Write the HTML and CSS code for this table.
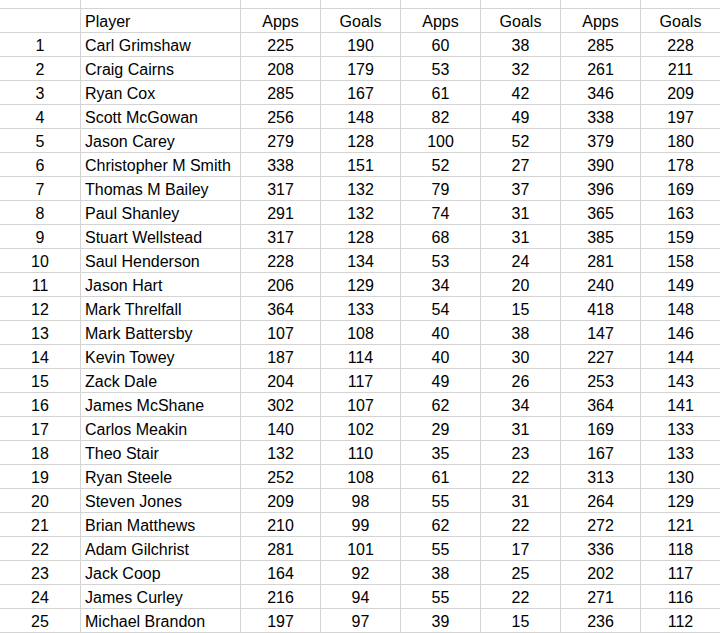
FILE: index.html
```html
<!DOCTYPE html>
<html>
<head>
<meta charset="utf-8">
<link rel="stylesheet" href="styles.css">
</head>
<body>
<div class="sheet" id="sheet">
  <div class="c top"></div><div class="c top"></div><div class="c top"></div><div class="c top"></div><div class="c top"></div><div class="c top"></div><div class="c top"></div><div class="c top"></div>
  <div class="c"></div><div class="c name">Player</div><div class="c">Apps</div><div class="c">Goals</div><div class="c">Apps</div><div class="c">Goals</div><div class="c">Apps</div><div class="c">Goals</div>
  <div class="c">1</div><div class="c name">Carl Grimshaw</div><div class="c">225</div><div class="c">190</div><div class="c">60</div><div class="c">38</div><div class="c">285</div><div class="c">228</div>
  <div class="c">2</div><div class="c name">Craig Cairns</div><div class="c">208</div><div class="c">179</div><div class="c">53</div><div class="c">32</div><div class="c">261</div><div class="c">211</div>
  <div class="c">3</div><div class="c name">Ryan Cox</div><div class="c">285</div><div class="c">167</div><div class="c">61</div><div class="c">42</div><div class="c">346</div><div class="c">209</div>
  <div class="c">4</div><div class="c name">Scott McGowan</div><div class="c">256</div><div class="c">148</div><div class="c">82</div><div class="c">49</div><div class="c">338</div><div class="c">197</div>
  <div class="c">5</div><div class="c name">Jason Carey</div><div class="c">279</div><div class="c">128</div><div class="c">100</div><div class="c">52</div><div class="c">379</div><div class="c">180</div>
  <div class="c">6</div><div class="c name">Christopher M Smith</div><div class="c">338</div><div class="c">151</div><div class="c">52</div><div class="c">27</div><div class="c">390</div><div class="c">178</div>
  <div class="c">7</div><div class="c name">Thomas M Bailey</div><div class="c">317</div><div class="c">132</div><div class="c">79</div><div class="c">37</div><div class="c">396</div><div class="c">169</div>
  <div class="c">8</div><div class="c name">Paul Shanley</div><div class="c">291</div><div class="c">132</div><div class="c">74</div><div class="c">31</div><div class="c">365</div><div class="c">163</div>
  <div class="c">9</div><div class="c name">Stuart Wellstead</div><div class="c">317</div><div class="c">128</div><div class="c">68</div><div class="c">31</div><div class="c">385</div><div class="c">159</div>
  <div class="c">10</div><div class="c name">Saul Henderson</div><div class="c">228</div><div class="c">134</div><div class="c">53</div><div class="c">24</div><div class="c">281</div><div class="c">158</div>
  <div class="c">11</div><div class="c name">Jason Hart</div><div class="c">206</div><div class="c">129</div><div class="c">34</div><div class="c">20</div><div class="c">240</div><div class="c">149</div>
  <div class="c">12</div><div class="c name">Mark Threlfall</div><div class="c">364</div><div class="c">133</div><div class="c">54</div><div class="c">15</div><div class="c">418</div><div class="c">148</div>
  <div class="c">13</div><div class="c name">Mark Battersby</div><div class="c">107</div><div class="c">108</div><div class="c">40</div><div class="c">38</div><div class="c">147</div><div class="c">146</div>
  <div class="c">14</div><div class="c name">Kevin Towey</div><div class="c">187</div><div class="c">114</div><div class="c">40</div><div class="c">30</div><div class="c">227</div><div class="c">144</div>
  <div class="c">15</div><div class="c name">Zack Dale</div><div class="c">204</div><div class="c">117</div><div class="c">49</div><div class="c">26</div><div class="c">253</div><div class="c">143</div>
  <div class="c">16</div><div class="c name">James McShane</div><div class="c">302</div><div class="c">107</div><div class="c">62</div><div class="c">34</div><div class="c">364</div><div class="c">141</div>
  <div class="c">17</div><div class="c name">Carlos Meakin</div><div class="c">140</div><div class="c">102</div><div class="c">29</div><div class="c">31</div><div class="c">169</div><div class="c">133</div>
  <div class="c">18</div><div class="c name">Theo Stair</div><div class="c">132</div><div class="c">110</div><div class="c">35</div><div class="c">23</div><div class="c">167</div><div class="c">133</div>
  <div class="c">19</div><div class="c name">Ryan Steele</div><div class="c">252</div><div class="c">108</div><div class="c">61</div><div class="c">22</div><div class="c">313</div><div class="c">130</div>
  <div class="c">20</div><div class="c name">Steven Jones</div><div class="c">209</div><div class="c">98</div><div class="c">55</div><div class="c">31</div><div class="c">264</div><div class="c">129</div>
  <div class="c">21</div><div class="c name">Brian Matthews</div><div class="c">210</div><div class="c">99</div><div class="c">62</div><div class="c">22</div><div class="c">272</div><div class="c">121</div>
  <div class="c">22</div><div class="c name">Adam Gilchrist</div><div class="c">281</div><div class="c">101</div><div class="c">55</div><div class="c">17</div><div class="c">336</div><div class="c">118</div>
  <div class="c">23</div><div class="c name">Jack Coop</div><div class="c">164</div><div class="c">92</div><div class="c">38</div><div class="c">25</div><div class="c">202</div><div class="c">117</div>
  <div class="c">24</div><div class="c name">James Curley</div><div class="c">216</div><div class="c">94</div><div class="c">55</div><div class="c">22</div><div class="c">271</div><div class="c">116</div>
  <div class="c">25</div><div class="c name">Michael Brandon</div><div class="c">197</div><div class="c">97</div><div class="c">39</div><div class="c">15</div><div class="c">236</div><div class="c">112</div>
</div>
</body>
</html>
```
FILE: styles.css
```css
html, body {
  margin: 0;
  padding: 0;
  background: #ffffff;
}
body {
  width: 720px;
  height: 633px;
  overflow: hidden;
}
.sheet {
  display: grid;
  grid-template-columns: 81px 160px repeat(6, 80px);
  grid-template-rows: 9px repeat(26, 24px);
  width: 721px;
  font-family: "Liberation Sans", Arial, sans-serif;
  font-size: 16px;
  color: #000000;
}
.c {
  box-sizing: border-box;
  border-right: 1px solid #d4d4d4;
  border-bottom: 1px solid #d4d4d4;
  text-align: center;
  line-height: 20px;
  padding-top: 3px;
  white-space: nowrap;
  overflow: hidden;
}
.c.top {
  padding: 0;
}
.c.name {
  text-align: left;
  padding-left: 4px;
}
```
